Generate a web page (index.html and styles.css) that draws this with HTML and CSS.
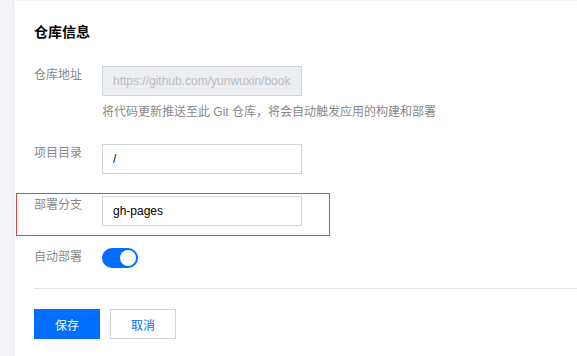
FILE: index.html
```html
<!DOCTYPE html>
<html lang="zh-CN">
<head>
  <meta charset="UTF-8" />
  <meta name="viewport" content="width=device-width, initial-scale=1.0"/>
  <title>仓库信息</title>
  <link rel="stylesheet" href="styles.css">
</head>
<body>
  <div class="card">
    <h3 class="card-title">仓库信息</h3>
    <form class="form">
      <div class="form-row">
        <label class="form-label">仓库地址</label>
        <div class="form-control">
          <input type="text" class="input" value="https://github.com/yunwuxin/book" disabled />
          <p class="form-help">将代码更新推送至此 Git 仓库，将会自动触发应用的构建和部署</p>
        </div>
      </div>

      <div class="form-row">
        <label class="form-label">项目目录</label>
        <div class="form-control">
          <input type="text" class="input" value="/" />
        </div>
      </div>

      <div class="form-row highlighted">
        <label class="form-label">部署分支</label>
        <div class="form-control">
          <input type="text" class="input" value="gh-pages" />
        </div>
      </div>

      <div class="form-row form-row-last">
        <label class="form-label">自动部署</label>
        <div class="form-control">
          <span class="switch is-on"><span class="switch-knob"></span></span>
        </div>
      </div>

      <div class="form-footer">
        <button type="submit" class="btn btn-primary">保存</button>
        <button type="button" class="btn">取消</button>
      </div>
    </form>
  </div>
</body>
</html>
```

FILE: styles.css
```css
body {
  margin: 0;
  padding: 1px 0 0 14px;
  background-color: #f3f4f7;
  font-family: "Liberation Sans", "Noto Sans CJK SC", sans-serif;
  font-size: 12px;
  color: #000;
  overflow: hidden;
}
.card {
  background-color: white;
  padding: 21px 0 40px 20px;
  min-height: 400px;
  box-shadow: -1px 0 0 #e6e8ed;
}
.card-title {
  margin: 0 0 24px;
  font-size: 14px;
  line-height: 20px;
  font-weight: bold;
  color: #000;
}
.form-row {
  display: flex;
  align-items: flex-start;
  margin-bottom: 22px;
  position: relative;
}
.form-row-last {
  margin-bottom: 20px;
}
.form-label {
  width: 68px;
  flex-shrink: 0;
  line-height: 18px;
  color: #888;
}
.form-control {
  flex: 1;
}
.input {
  display: block;
  box-sizing: border-box;
  width: 200px;
  height: 30px;
  padding: 0 10px;
  border: 1px solid #cfd5de;
  border-radius: 0;
  background: white;
  font-family: inherit;
  font-size: 12px;
  color: #000;
  outline: none;
}
.input:disabled {
  background-color: #eceef2;
  color: #bbb;
}
.form-help {
  margin: 6px 0 0;
  line-height: 20px;
  color: #888;
}
/* red annotation box */
.highlighted::after {
  content: "";
  position: absolute;
  left: -18px;
  top: -3px;
  width: 312px;
  height: 41px;
  border: 1px solid #e54545;
  pointer-events: none;
}
.switch {
  display: block;
  position: relative;
  width: 36px;
  height: 20px;
  border-radius: 10px;
  background-color: #ccc;
}
.switch.is-on {
  background-color: #006eff;
}
.switch-knob {
  position: absolute;
  top: 2px;
  left: 2px;
  width: 16px;
  height: 16px;
  border-radius: 50%;
  background: white;
}
.switch.is-on .switch-knob {
  left: 18px;
}
.form-footer {
  display: flex;
  gap: 10px;
  border-top: 1px solid #e5e5e5;
  padding-top: 20px;
}
.btn {
  box-sizing: border-box;
  width: 66px;
  height: 30px;
  border: 1px solid #cfd5de;
  background: white;
  color: #006eff;
  font-family: inherit;
  font-size: 12px;
  cursor: pointer;
}
.btn-primary {
  background-color: #006eff;
  border-color: #006eff;
  color: white;
}
```
